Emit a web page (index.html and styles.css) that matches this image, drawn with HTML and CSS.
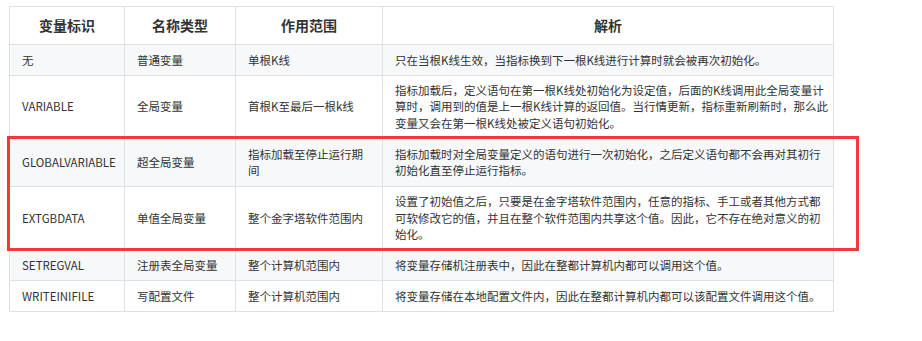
FILE: index.html
```html
<!DOCTYPE html>
<html lang="zh-CN">
<head>
<meta charset="utf-8">
<title>变量标识</title>
<link rel="stylesheet" href="styles.css">
</head>
<body>
<div class="wrap">
  <table class="vars">
    <colgroup>
      <col class="c1"><col class="c2"><col class="c3"><col class="c4">
    </colgroup>
    <tr class="head">
      <th>变量标识</th><th>名称类型</th><th>作用范围</th><th>解析</th>
    </tr>
    <tr class="r1">
      <td>无</td><td>普通变量</td><td>单根K线</td>
      <td class="desc">只在当根K线生效，当指标换到下一根K线进行计算时就会被再次初始化。</td>
    </tr>
    <tr class="r2">
      <td>VARIABLE</td><td>全局变量</td><td>首根K至最后一根k线</td>
      <td class="desc">指标加载后，定义语句在第一根K线处初始化为设定值，后面的K线调用此全局变量计算时，调用到的值是上一根K线计算的返回值。当行情更新，指标重新刷新时，那么此变量又会在第一根K线处被定义语句初始化。</td>
    </tr>
    <tr class="r3">
      <td>GLOBALVARIABLE</td><td>超全局变量</td><td>指标加载至停止运行期间</td>
      <td class="desc">指标加载时对全局变量定义的语句进行一次初始化，之后定义语句都不会再对其初行初始化直至停止运行指标。</td>
    </tr>
    <tr class="r4">
      <td>EXTGBDATA</td><td>单值全局变量</td><td>整个金字塔软件范围内</td>
      <td class="desc">设置了初始值之后，只要是在金字塔软件范围内，任意的指标、手工或者其他方式都可软修改它的值，并且在整个软件范围内共享这个值。因此，它不存在绝对意义的初始化。</td>
    </tr>
    <tr class="r5">
      <td>SETREGVAL</td><td>注册表全局变量</td><td>整个计算机范围内</td>
      <td class="desc">将变量存储机注册表中，因此在整都计算机内都可以调用这个值。</td>
    </tr>
    <tr class="r6">
      <td>WRITEINIFILE</td><td>写配置文件</td><td>整个计算机范围内</td>
      <td class="desc">将变量存储在本地配置文件内，因此在整都计算机内都可以该配置文件调用这个值。</td>
    </tr>
  </table>
  <div class="mark"></div>
</div>
</body>
</html>
```
FILE: styles.css
```css
html, body {
  margin: 0;
  padding: 0;
  background: #ffffff;
}
body {
  font-family: "Noto Sans CJK SC", "Noto Sans", sans-serif;
  color: #333333;
}
.wrap {
  position: relative;
  width: 824px;
  margin: 6px 0 0 9px;
}
.vars {
  border-collapse: collapse;
  table-layout: fixed;
  width: 824px;
  font-size: 11.5px;
  line-height: 16.5px;
}
.c1 { width: 115px; }
.c2 { width: 111px; }
.c3 { width: 147px; }
.c4 { width: 451px; }
.vars th, .vars td {
  border: 1px solid #dfe2e5;
  vertical-align: middle;
  text-align: left;
  padding: 0 12px;
  box-sizing: border-box;
}
.vars th {
  font-size: 14px;
  font-weight: bold;
  text-align: center;
  padding: 0 6px;
}
.vars td.desc {
  padding-right: 2px;
}
.vars tr:nth-child(2n) {
  background: #f6f8fa;
}
.head th { height: 38px; }
.r1 td { height: 31px; }
.r2 td { height: 62px; }
.r3 td { height: 49px; }
.r4 td { height: 63px; }
.r5 td { height: 31px; }
.r6 td { height: 31px; }
.mark {
  position: absolute;
  left: -2px;
  top: 130px;
  width: 852px;
  height: 115px;
  box-sizing: border-box;
  border: 3px solid #f03a3a;
  pointer-events: none;
}
```
